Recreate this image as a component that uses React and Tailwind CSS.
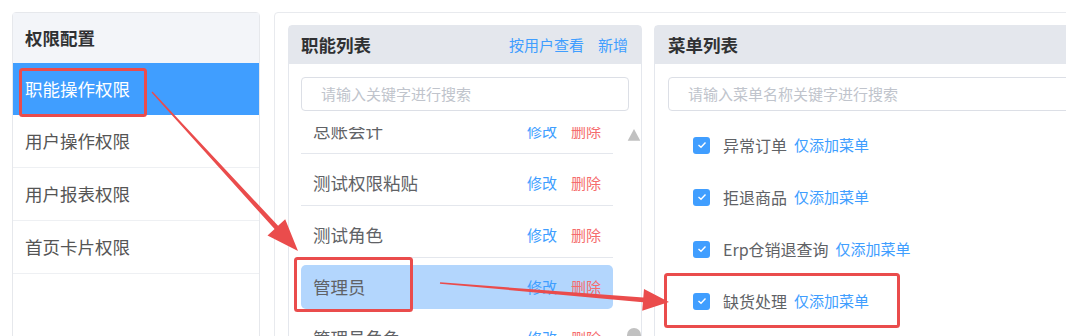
import React from 'react';

const RED = '#ea4c4c';

const roles = ['总账会计', '测试权限粘贴', '测试角色', '管理员', '管理员角色'];
const menus = ['异常订单', '拒退商品', 'Erp仓销退查询', '缺货处理'];

function arrowPoints(x1, y1, x2, y2, headLen, headHalf, shaft, tail) {
  const dx = x2 - x1;
  const dy = y2 - y1;
  const len = Math.hypot(dx, dy);
  const ux = dx / len;
  const uy = dy / len;
  const nx = -uy;
  const ny = ux;
  const bx = x2 - ux * headLen;
  const by = y2 - uy * headLen;
  const p = (x, y) => `${x.toFixed(1)},${y.toFixed(1)}`;
  return [
    p(x1 + nx * tail, y1 + ny * tail),
    p(bx + nx * shaft, by + ny * shaft),
    p(bx + nx * headHalf, by + ny * headHalf),
    p(x2, y2),
    p(bx - nx * headHalf, by - ny * headHalf),
    p(bx - nx * shaft, by - ny * shaft),
    p(x1 - nx * tail, y1 - ny * tail),
  ].join(' ');
}

function LeftCard() {
  return (
    <div className="w-[248px] h-[360px] shrink-0 border border-[#e6e8ec] rounded-t-[4px] bg-white">
      <div className="h-[50px] bg-[#f3f5f9] flex items-center px-[12px] text-[17.5px] font-bold text-[#303133]">权限配置</div>
      <div className="h-[52px] bg-[#409eff] flex items-center px-[12px] text-[17.5px] text-white">职能操作权限</div>
      {['用户操作权限', '用户报表权限', '首页卡片权限'].map((t) => (
        <div key={t} className="h-[53px] border-b border-[#eef0f3] flex items-center px-[12px] text-[17.5px] text-[#555]">
          {t}
        </div>
      ))}
    </div>
  );
}

function RoleList() {
  return (
    <div className="w-[354px] h-[340px] shrink-0 border border-[#e4e7ed] rounded-t-[4px] flex flex-col">
      <div className="h-[38px] bg-[#e4e7ed] flex items-center justify-between pl-[12px] pr-[13px]">
        <span className="text-[17.5px] font-bold text-[#303133]">职能列表</span>
        <div className="flex gap-[14px] text-[15px] text-[#409eff]">
          <span>按用户查看</span>
          <span>新增</span>
        </div>
      </div>
      <div className="mx-[12px] mt-[13px] h-[34px] border border-[#dcdfe6] rounded-[4px] flex items-center pl-[19px] text-[15px] text-[#c0c4cc]">
        请输入关键字进行搜索
      </div>
      <div className="flex mt-[16px] flex-1 min-h-0">
        <div className="w-[312px] ml-[12px] overflow-hidden">
          <div className="-mt-[25px]">
            {roles.map((r) => {
              const active = r === '管理员';
              return (
                <div key={r} className={`pt-[7px] ${active ? '' : 'border-b border-[#e4e7ed]'}`}>
                  <div className={`h-[44px] flex items-center justify-between px-[12px] rounded-[5px] ${active ? 'bg-[#b3d6fd]' : ''}`}>
                    <span className="text-[17.5px] text-[#606266]">{r}</span>
                    <div className="flex gap-[14px] text-[15px]">
                      <span className="text-[#409eff]">修改</span>
                      <span className="text-[#f56c6c]">删除</span>
                    </div>
                  </div>
                </div>
              );
            })}
          </div>
        </div>
        <div className="ml-auto w-[14px] flex flex-col items-center">
          <svg width="14" height="13" viewBox="0 0 14 13" className="mt-[2px]">
            <polygon points="7,0 14,13 0,13" fill="#c1c1c1" />
          </svg>
          <div className="mt-[187px] w-[14px] h-[40px] rounded-full bg-[#c1c1c1]" />
        </div>
      </div>
    </div>
  );
}

function Check() {
  return (
    <span className="w-[17px] h-[17px] rounded-[3px] bg-[#409eff] flex items-center justify-center shrink-0">
      <svg width="10" height="8" viewBox="0 0 10 8">
        <polyline points="1.5,4 4,6.3 8.5,1.5" fill="none" stroke="white" strokeWidth="1.4" />
      </svg>
    </span>
  );
}

function MenuList() {
  return (
    <div className="w-[440px] h-[340px] shrink-0 border border-[#e4e7ed] rounded-t-[4px] flex flex-col">
      <div className="h-[38px] bg-[#e4e7ed] flex items-center px-[13px]">
        <span className="text-[17.5px] font-bold text-[#303133]">菜单列表</span>
      </div>
      <div className="mx-[13px] mt-[13px] h-[34px] border border-[#dcdfe6] rounded-[4px] flex items-center pl-[19px] text-[15px] text-[#c0c4cc]">
        请输入菜单名称关键字进行搜索
      </div>
      <div className="mt-[8px] pl-[38px]">
        {menus.map((m) => (
          <div key={m} className="h-[52px] flex items-center">
            <Check />
            <span className="ml-[13px] text-[16px] text-[#606266]">{m}</span>
            <span className="ml-[7px] text-[15px] text-[#409eff]">仅添加菜单</span>
          </div>
        ))}
      </div>
    </div>
  );
}

function Annotations() {
  return (
    <svg className="absolute inset-0 pointer-events-none" width="1066" height="336" viewBox="0 0 1066 336">
      <rect x="20.5" y="69.5" width="125" height="46" rx="2" fill="none" stroke={RED} strokeWidth="3" />
      <rect x="295.5" y="258.5" width="116" height="52" rx="2" fill="none" stroke={RED} strokeWidth="3" />
      <rect x="665.5" y="274.5" width="233" height="52" rx="2" fill="none" stroke={RED} strokeWidth="3" />
      <polygon points={arrowPoints(152, 92, 298, 251, 32, 12, 2.4, 0.7)} fill={RED} />
      <polygon points={arrowPoints(440, 283, 669, 302, 26, 11, 2.4, 0.7)} fill={RED} />
    </svg>
  );
}

export default function App() {
  return (
    <div className="relative w-[1066px] h-[336px] overflow-hidden bg-white flex gap-[14px] pl-[12px] pt-[12px] font-['Noto_Sans_CJK_SC','Microsoft_YaHei',sans-serif]">
      <LeftCard />
      <div className="w-[820px] h-[360px] shrink-0 border border-[#e8eaee] rounded-[4px] pt-[12px] pl-[13px] flex gap-[12px]">
        <RoleList />
        <MenuList />
      </div>
      <Annotations />
    </div>
  );
}
